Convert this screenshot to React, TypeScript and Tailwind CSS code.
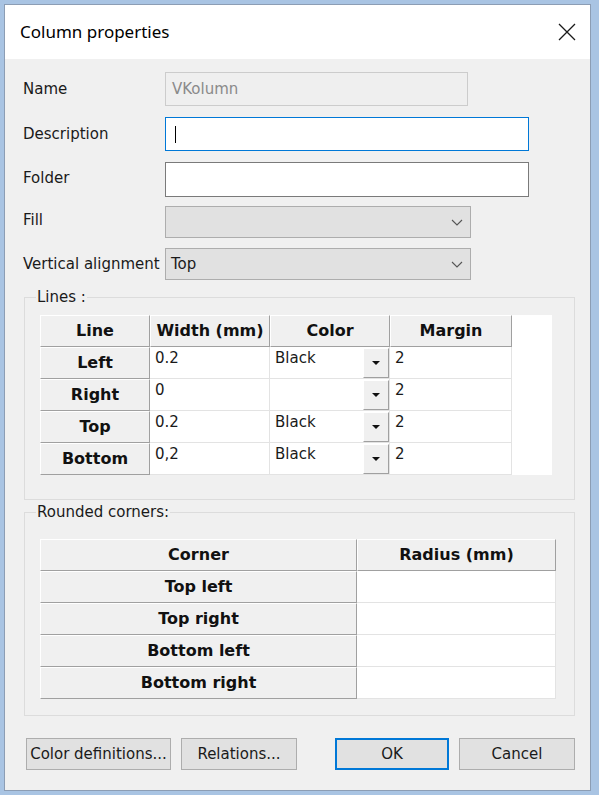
import React from "react";

const rows = [
  { name: "Left", width: "0.2", color: "Black", margin: "2" },
  { name: "Right", width: "0", color: "", margin: "2" },
  { name: "Top", width: "0.2", color: "Black", margin: "2" },
  { name: "Bottom", width: "0,2", color: "Black", margin: "2" },
];

const corners = ["Top left", "Top right", "Bottom left", "Bottom right"];

// 3D header cell like a WinForms DataGridView header
const HeadCell: React.FC<{ children?: React.ReactNode }> = ({ children }) => (
  <div className="h-[32px] flex items-center justify-center bg-[#f0f0f0] border-t border-l border-t-white border-l-white border-r border-b border-r-[#a0a0a0] border-b-[#a0a0a0] font-bold text-[16px] text-[#111]">
    {children}
  </div>
);

const DataCell: React.FC<{ children?: React.ReactNode }> = ({ children }) => (
  <div className="h-[32px] bg-white border-r border-b border-[#e3e3e3] pl-[5px] pt-[2px] leading-[18px] text-[15px]">
    {children}
  </div>
);

const Chevron = () => (
  <svg width="12" height="7" viewBox="0 0 12 7" fill="none">
    <path d="M1 1l5 5 5-5" stroke="#555" strokeWidth="1.1" />
  </svg>
);

const App: React.FC = () => {
  return (
    <div className="w-[599px] h-[795px] bg-[#a9c4e3] pt-[4px] pl-[4px] font-['DejaVu_Sans',sans-serif] text-[15px] text-[#1a1a1a]">
      <div className="w-[587px] h-[787px] border border-[#8c9db4] bg-[#f0f0f0] flex flex-col">
        {/* Title bar */}
        <div className="h-[54px] bg-white flex items-center justify-between pl-[15px] pr-[14px]">
          <span className="font-['Noto_Sans',sans-serif] text-[17px] text-black">Column properties</span>
          <svg width="18" height="18" viewBox="0 0 18 18">
            <path d="M1 1L17 17M17 1L1 17" stroke="#1a1a1a" strokeWidth="1.3" />
          </svg>
        </div>

        {/* Body */}
        <div className="flex-1 flex flex-col pl-[18px] pt-[13px]">
          <div className="flex items-center h-[34px]">
            <span className="w-[142px]">Name</span>
            <div className="w-[303px] h-[34px] border border-[#cccccc] bg-[#efefef] flex items-center pl-[6px] text-[#8a8a8a]">
              VKolumn
            </div>
          </div>
          <div className="flex items-center h-[34px] mt-[11px]">
            <span className="w-[142px]">Description</span>
            <div className="w-[364px] h-[34px] border border-[#0078d7] bg-white flex items-center pl-[9px]">
              <div className="w-px h-[17px] bg-black" />
            </div>
          </div>
          <div className="flex items-center h-[35px] mt-[11px]">
            <span className="w-[142px] -mt-[3px]">Folder</span>
            <div className="w-[364px] h-[35px] border border-[#7a7a7a] bg-white" />
          </div>
          <div className="flex items-center h-[32px] mt-[9px]">
            <span className="w-[142px] -mt-[3px]">Fill</span>
            <div className="w-[306px] h-[32px] border border-[#adadad] bg-[#e1e1e1] flex items-center justify-end pr-[7px]">
              <Chevron />
            </div>
          </div>
          <div className="flex items-center h-[32px] mt-[10px]">
            <span className="w-[142px]">Vertical alignment</span>
            <div className="w-[306px] h-[32px] border border-[#adadad] bg-[#e1e1e1] flex items-center justify-between pl-[5px] pr-[7px]">
              <span>Top</span>
              <Chevron />
            </div>
          </div>

          {/* Lines group */}
          <fieldset className="ml-px mt-[8px] w-[551px] border border-[#dcdcdc]">
            <legend className="ml-[11px] px-[1px] leading-[18px]">Lines :</legend>
            <div className="pl-[15px] pt-[9px] pb-[24px]">
              <div className="w-[512px] h-[160px] bg-white">
                <div className="grid grid-cols-[110px_120px_120px_122px] w-[472px]">
                  <HeadCell>Line</HeadCell>
                  <HeadCell>Width (mm)</HeadCell>
                  <HeadCell>Color</HeadCell>
                  <HeadCell>Margin</HeadCell>
                  {rows.map((r) => (
                    <React.Fragment key={r.name}>
                      <HeadCell>{r.name}</HeadCell>
                      <DataCell>{r.width}</DataCell>
                      <div className="h-[32px] bg-white border-r border-b border-[#e3e3e3] flex">
                        <span className="flex-1 pl-[5px] pt-[2px] leading-[18px]">{r.color}</span>
                        <div className="w-[26px] h-[30px] mt-px bg-[#f0f0f0] border-t border-l border-t-white border-l-white border-r border-b border-r-[#a0a0a0] border-b-[#a0a0a0] flex items-center justify-center">
                          <svg width="8" height="4" viewBox="0 0 8 4">
                            <path d="M0 0h8L4 4z" fill="#111" />
                          </svg>
                        </div>
                      </div>
                      <DataCell>{r.margin}</DataCell>
                    </React.Fragment>
                  ))}
                </div>
              </div>
            </div>
          </fieldset>

          {/* Rounded corners group */}
          <fieldset className="ml-px mt-[3px] w-[551px] border border-[#dcdcdc]">
            <legend className="ml-[11px] px-[1px] leading-[18px]">Rounded corners:</legend>
            <div className="pl-[15px] pt-[18px] pb-[16px]">
              <div className="grid grid-cols-[317px_199px] w-[516px] bg-white">
                <HeadCell>Corner</HeadCell>
                <HeadCell>Radius (mm)</HeadCell>
                {corners.map((c) => (
                  <React.Fragment key={c}>
                    <HeadCell>{c}</HeadCell>
                    <div className="h-[32px] bg-white border-b border-r border-[#e3e3e3]" />
                  </React.Fragment>
                ))}
              </div>
            </div>
          </fieldset>

          {/* Buttons */}
          <div className="flex items-center mt-[22px] ml-[3px]">
            <button className="w-[145px] h-[32px] border border-[#adadad] bg-[#e1e1e1] whitespace-nowrap overflow-hidden flex items-center justify-center">
              Color definitions...
            </button>
            <button className="ml-[10px] w-[116px] h-[32px] border border-[#adadad] bg-[#e1e1e1] whitespace-nowrap">
              Relations...
            </button>
            <button className="ml-[38px] w-[114px] h-[32px] border-2 border-[#0078d7] bg-[#e1e1e1]">OK</button>
            <button className="ml-[10px] w-[116px] h-[32px] border border-[#adadad] bg-[#e1e1e1]">Cancel</button>
          </div>
        </div>
      </div>
    </div>
  );
};

export default App;
